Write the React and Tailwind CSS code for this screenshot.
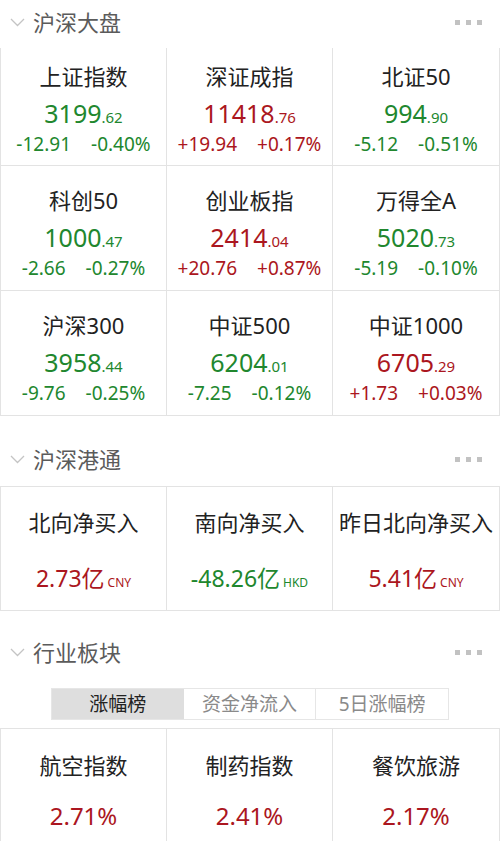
import React from "react";

const FONT = { fontFamily: '"Noto Sans", "Noto Sans CJK SC", sans-serif' };

const GREEN = "text-[#21872e]";
const RED = "text-[#ab1620]";

const indices = [
  { name: "上证指数", int: "3199", dec: ".62", chg: "-12.91", pct: "-0.40%", up: false },
  { name: "深证成指", int: "11418", dec: ".76", chg: "+19.94", pct: "+0.17%", up: true },
  { name: "北证50", int: "994", dec: ".90", chg: "-5.12", pct: "-0.51%", up: false },
  { name: "科创50", int: "1000", dec: ".47", chg: "-2.66", pct: "-0.27%", up: false },
  { name: "创业板指", int: "2414", dec: ".04", chg: "+20.76", pct: "+0.87%", up: true },
  { name: "万得全A", int: "5020", dec: ".73", chg: "-5.19", pct: "-0.10%", up: false },
  { name: "沪深300", int: "3958", dec: ".44", chg: "-9.76", pct: "-0.25%", up: false },
  { name: "中证500", int: "6204", dec: ".01", chg: "-7.25", pct: "-0.12%", up: false },
  { name: "中证1000", int: "6705", dec: ".29", chg: "+1.73", pct: "+0.03%", up: true },
];

const flows = [
  { name: "北向净买入", value: "2.73亿", unit: "CNY", up: true },
  { name: "南向净买入", value: "-48.26亿", unit: "HKD", up: false },
  { name: "昨日北向净买入", value: "5.41亿", unit: "CNY", up: true },
];

const sectors = [
  { name: "航空指数", pct: "2.71%" },
  { name: "制药指数", pct: "2.41%" },
  { name: "餐饮旅游", pct: "2.17%" },
];

function SectionHeader({ title }) {
  return (
    <div className="flex h-[44px] items-center justify-between px-[10px]">
      <div className="flex items-center gap-[8px]">
        <svg width="15" height="9" viewBox="0 0 15 9" fill="none">
          <path d="M1 1l6.5 6.5L14 1" stroke="#c4c4c4" strokeWidth="1.3" />
        </svg>
        <span className="text-[22px] text-[#5b5b5b]">{title}</span>
      </div>
      <div className="mr-[8px] flex gap-[6px]">
        <span className="h-[5px] w-[5px] bg-[#c2c2c2]" />
        <span className="h-[5px] w-[5px] bg-[#c2c2c2]" />
        <span className="h-[5px] w-[5px] bg-[#c2c2c2]" />
      </div>
    </div>
  );
}

export default function App() {
  return (
    <div className="w-[500px] bg-white text-[#222]" style={FONT}>
      {/* 沪深大盘 */}
      <SectionHeader title="沪深大盘" />
      <div className="mt-[4px] grid grid-cols-3 border-x border-[#e3e3e3]">
        {indices.map((it, i) => {
          const color = it.up ? RED : GREEN;
          const first = i < 3;
          return (
            <div
              key={it.name}
              className={`flex flex-col items-center ${first ? "h-[118px] pt-[14px]" : "h-[125px] pt-[20px]"} ${
                i % 3 !== 2 ? "border-r border-[#e3e3e3]" : ""
              } border-b border-[#e3e3e3]`}
            >
              <div className="h-[28px] text-[22px] leading-[28px]">{it.name}</div>
              <div className={`mt-[7px] h-[32px] leading-[32px] ${color}`}>
                <span className="text-[25px]">{it.int}</span>
                <span className="text-[15px]">{it.dec}</span>
              </div>
              <div className={`mt-[3px] flex h-[24px] gap-[20px] text-[19px] leading-[24px] ${color}`}>
                <span>{it.chg}</span>
                <span>{it.pct}</span>
              </div>
            </div>
          );
        })}
      </div>

      {/* 沪深港通 */}
      <div className="mt-[21px]">
        <SectionHeader title="沪深港通" />
        <div className="mt-[5px] grid grid-cols-3 border border-[#e3e3e3]">
          {flows.map((it, i) => (
            <div
              key={it.name}
              className={`flex h-[123px] flex-col items-center pt-[21px] ${
                i < 2 ? "border-r border-[#e3e3e3]" : ""
              }`}
            >
              <div className="h-[28px] whitespace-nowrap text-[22px] leading-[28px]">{it.name}</div>
              <div className={`mt-[26px] flex h-[32px] items-baseline leading-[32px] ${it.up ? RED : GREEN}`}>
                <span className="text-[23px]">{it.value}</span>
                <span className="ml-[3px] text-[12px]">{it.unit}</span>
              </div>
            </div>
          ))}
        </div>
      </div>

      {/* 行业板块 */}
      <div className="mt-[19px]">
        <SectionHeader title="行业板块" />
        <div className="mt-[14px] flex justify-center">
          <div className="flex h-[32px] w-[398px] border border-[#e6e6e6] text-[19px] leading-[30px]">
            <div className="flex-1 bg-[#dedede] text-center text-[#222]">涨幅榜</div>
            <div className="flex-1 border-r border-[#e6e6e6] text-center text-[#8a8a8a]">资金净流入</div>
            <div className="flex-1 text-center text-[#8a8a8a]">5日涨幅榜</div>
          </div>
        </div>
        <div className="mt-[8px] grid grid-cols-3 border-x border-t border-[#e3e3e3]">
          {sectors.map((it, i) => (
            <div
              key={it.name}
              className={`flex h-[120px] flex-col items-center pt-[22px] ${
                i < 2 ? "border-r border-[#e3e3e3]" : ""
              }`}
            >
              <div className="h-[28px] text-[22px] leading-[28px]">{it.name}</div>
              <div className={`mt-[21px] h-[32px] text-[24px] leading-[32px] ${RED}`}>{it.pct}</div>
            </div>
          ))}
        </div>
      </div>
    </div>
  );
}
